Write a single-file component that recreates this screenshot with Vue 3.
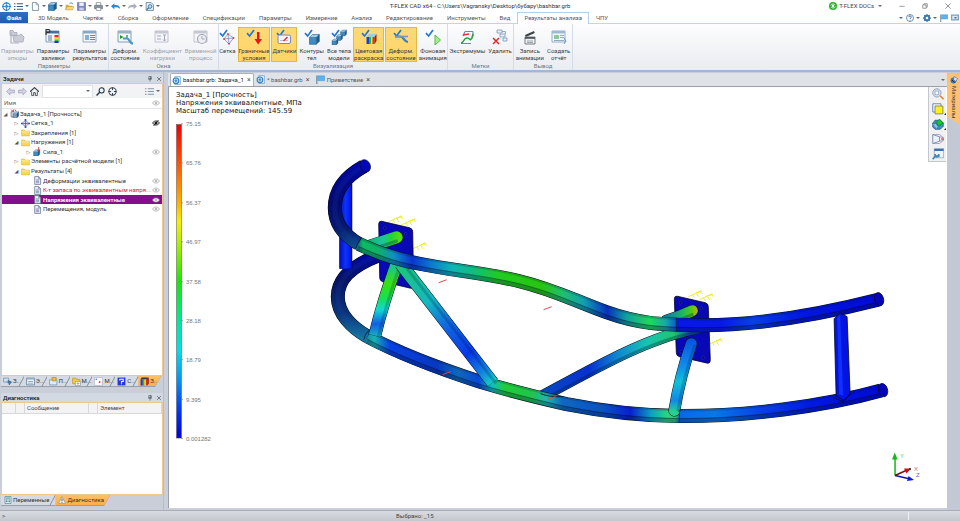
<script setup>
import { ref } from 'vue'

const tick = '<path d="M1 4.2l2.6 2.8L8 1" fill="none" stroke="#1f78d8" stroke-width="1.7"/>'
const cube = (x, y, s, c = '#3e8cc4') =>
  `<g transform="translate(${x} ${y}) scale(${s})"><path d="M0 3h7v7H0z" fill="${c}"/><path d="M0 3l3-3h7L7 3z" fill="#9fd0ee"/><path d="M7 3l3-3v7l-3 3z" fill="#1d5c8c"/><path d="M0 3h7v7H0zM0 3l3-3h7L7 3M10 0v7l-3 3" fill="none" stroke="#1c5480" stroke-width=".6"/></g>`
const folder = '<path d="M1 3.500h5l1.500 2H15v8.500H1z" fill="#f7d75c" stroke="#d9b040" stroke-width="1"/><path d="M1.500 7h13" stroke="#fdeb9c" stroke-width="2"/>'
const page = '<path d="M3 1h7l3.500 3.500V15H3z" fill="#eef1f8" stroke="#66708c" stroke-width="1.300"/><path d="M10 1v4h3.500M5 7h6M5 9.500h6M5 12h6" fill="none" stroke="#5a6c9c" stroke-width="1.200"/>'
const windowShape = (c, t) =>
  `<path d="M1 2h13v11H1z" fill="#f4f6fa" stroke="${c}" stroke-width=".8"/><path d="M1 2h13v2.500H1z" fill="${t}"/>`

const icons = {
  logo: '<circle cx="8" cy="8" r="6.500" fill="#eef7fd" stroke="#2a86c8" stroke-width="2"/><circle cx="8" cy="8" r="2.500" fill="#2a86c8"/><path d="M8 0v5M8 11v5M0 8h5M11 8h5" stroke="#2a86c8" stroke-width="1.800"/>',
  file: '<path d="M5 1h10v14H5z" fill="#e8f2fb" stroke="#6c9cc8" stroke-width="1.200"/><circle cx="7" cy="8.500" r="5" fill="#d4eafa" stroke="#2a80c8" stroke-width="2"/><path d="M7 5.500v6M4.500 8.500h5" stroke="#2a6cb0" stroke-width="1.500"/>',
  list: '<path d="M5 3h11M5 8h11M5 13h11" stroke="#3a5878" stroke-width="1.800"/><path d="M0 3h2.500M0 8h2.500M0 13h2.500" stroke="#3a5878" stroke-width="2"/>',
  doc: '<path d="M2.500 1h7l4 4v10h-11z" fill="#fff" stroke="#7088a0" stroke-width="1.500"/><path d="M9.500 1v4h4" fill="none" stroke="#7088a0" stroke-width="1.200"/>',
  cube: cube(0.5, 1, 1.45),
  open: '<path d="M1 5h5l1 1.500h6V14H1z" fill="#d9b23e"/><path d="M1 14l3-6h12l-3 6z" fill="#f7d873" stroke="#b98d20" stroke-width=".8"/><path d="M8 3c2-2 5-2 6 1" fill="none" stroke="#3878b8" stroke-width="1.600"/>',
  save: '<path d="M1 1h14v14H1z" fill="#7d86c4" stroke="#525a98"/><path d="M4 1h8v6H4z" fill="#eef0fa"/><path d="M4 10h8v5H4z" fill="#c8cde8"/>',
  print: '<path d="M4 1h8v5H4z" fill="#fff" stroke="#606870"/><path d="M1 6h14v6H1z" fill="#8c949e" stroke="#5c646e"/><path d="M4 10h8v5H4z" fill="#fff" stroke="#606870"/>',
  undo: '<path d="M6 2L0 7.500 6 13V9.500c4-1 8 0 10 3 0-6-4-8-10-7z" fill="#2e86d0"/>',
  redo: '<path d="M10 2l6 5.500-6 5.500V9.500c-4-1-8 0-10 3 0-6 4-8 10-7z" fill="#a9aec0"/>',
  preview: '<path d="M2 1h9l4 4v10H2z" fill="#eaf2fa" stroke="#4a7090" stroke-width="1.300"/><circle cx="9" cy="8" r="3.300" fill="#bfe0f4" stroke="#2d648c" stroke-width="1.500"/><path d="M6.500 10.500L3 14" stroke="#2d648c" stroke-width="2"/>',
  docs: '<circle cx="8" cy="8" r="8" fill="#2bb32b"/><path d="M3.500 7a5 5 0 018-1.500M12.500 9a5 5 0 01-8 1.500" fill="none" stroke="#fff" stroke-width="1.800"/><path d="M6 6h4v4H6z" fill="#fff"/>',
  help: '<circle cx="8" cy="8" r="7" fill="#fff" stroke="#3a6f98" stroke-width="1.500"/><path d="M5.500 6.200c0-3.400 5-3.400 5 0 0 1.800-2.500 2-2.500 3.800M8 11.500v1.700" fill="none" stroke="#2d6088" stroke-width="1.700"/>',
  gear: '<circle cx="8" cy="8" r="4.500" fill="none" stroke="#3f7cac" stroke-width="4"/><path d="M8 0v16M0 8h16M2.400 2.400l11.200 11.200M13.600 2.400L2.400 13.600" stroke="#3f7cac" stroke-width="2.500"/><circle cx="8" cy="8" r="2.500" fill="#fff"/>',
  flag: '<path d="M1.500 1v15" stroke="#5c7890" stroke-width="1.800"/><path d="M3 1.500h12.500v8.500H3z" fill="#5cb3ee" stroke="#3a88c4" stroke-width=".8"/>',
  monitor: '<path d="M0 1h16v12H0z" fill="#7e9fc0"/><path d="M2.500 3.500h11v7h-11z" fill="#dbeaf6"/><path d="M7 6h4v3H7z" fill="#3a709c"/>',
  pEpure: '<path d="M1 1.500h3l1 2h3v3H1zM4 7c2-2 5 1 8-2l3 3-1 5H5z" fill="#c9ccd6" stroke="#a5a9b8" stroke-width=".8"/><path d="M2 3v11h8" fill="none" stroke="#b0b4c2" stroke-width="1.200"/>',
  pFill: windowShape('#6c88a8', '#48719c') + '<path d="M9.500 6h4v2.500h-4z" fill="#ee2a1c"/><path d="M9.500 8.500h4v2h-4z" fill="#f6dc1c"/><path d="M9.500 10.500h4V12h-4z" fill="#2cc43c"/><path d="M9.500 12h4v2h-4z" fill="#1838d8"/><path d="M3 7h4M3 9h4M3 11h4" stroke="#5a7898"/><path d="M1 6V.5h2.500c2 0 2 3 0 3H1" fill="none" stroke="#333" stroke-width="1.100"/>',
  pResult: windowShape('#7f98b4', '#88a8c8') + '<path d="M3 6h4v5H3z" fill="#78b4dc"/><path d="M8 6.500h5M8 8.500h5M8 10.500h5" stroke="#5a7898" stroke-width=".9"/>',
  wDeform: windowShape('#6c88a8', '#9cb2c8') + '<path d="M3 6l3.500 2L3 10z" fill="#18a028"/><path d="M10 6v4" stroke="#18a028" stroke-width="1.300"/><path d="M6 9.500h4c3 0 2 5 6 5" fill="none" stroke="#4a98c8" stroke-width="2.200"/>',
  wLoad: windowShape('#b4b8c4', '#c6c9d2') + '<path d="M3 7h4M3 10h4M10.500 6v6M9 10.500l1.500 1.500 1.500-1.500M9 6h3" fill="none" stroke="#a4a8b6"/>',
  wTime: windowShape('#b4b8c4', '#c6c9d2') + '<circle cx="9" cy="10" r="4.500" fill="#eceef2" stroke="#a4a8b6" stroke-width="1.200"/><path d="M9 7v3h2.500" fill="none" stroke="#a4a8b6"/>',
  mesh: tick + '<path d="M5 10l4-5 5.500 4-4.500 6zM9 5l1 10M5 10l9.500-1" fill="none" stroke="#8c98cc" stroke-width=".9"/><path d="M8.200 4.200h1.600v1.600H8.200zM4.200 9.200h1.600v1.600H4.200zM13.700 8.200h1.600v1.600h-1.600zM9.200 14h1.600v1.600H9.200z" fill="#e02828"/>',
  bounds: tick + '<path d="M11 3h2.500v7H16l-3.800 5.500L8.500 10H11z" fill="#ec1616"/>',
  sensors: tick + '<rect x="2" y="6" width="12.500" height="8.500" rx="1.500" fill="#f3f4fb" stroke="#7c88b8"/><path d="M4 11.500h8" stroke="#9ca4c4" stroke-width=".7"/><path d="M7.500 12l4-4" stroke="#e02828" stroke-width="1.300"/>',
  contours: tick + cube(5.5, 5.5, 0.98),
  bodies: tick + cube(9.5, 1, 0.6) + cube(5.5, 5.5, 0.6) + cube(1, 10, 0.6),
  paint: tick + '<path d="M5.500 8l2.500-3h7.500l-2 3z" fill="#9ad0dc"/><path d="M5.500 8h2.500v7H5.500z" fill="#1d3cd8"/><path d="M8 8h2v7H8z" fill="#18c43c"/><path d="M10 8h1.500v7H10z" fill="#f2e01c"/><path d="M11.500 8h2v7h-2z" fill="#ee2818"/><path d="M13.500 8l2-3v7l-2 3z" fill="#a81408"/>',
  deform: tick + '<path d="M2 7.500h5c4 0 4 5.500 8 5.500" fill="none" stroke="#3c80b8" stroke-width="2.200"/><path d="M2 7.500h13" stroke="#7898ac" stroke-width="1.600"/><path d="M2 10h5" stroke="#b8d0e0"/>',
  anim: tick + '<path d="M10 6l5.500 5-5.500 5z" fill="#a6f08c" stroke="#56b84c"/>',
  extrema: '<path d="M6 2.500h8M6 2.500L4 7M14 2.500v5M2 14.500h10" stroke="#6f8ca4" stroke-width="1.200"/><path d="M2 14c4-1 2-5 6-5s2 4 5 0l1-4" fill="none" stroke="#2c9c40" stroke-width="1.500"/><path d="M4 6l6-1" stroke="#e83030" stroke-width="1.500"/>',
  remove: '<path d="M5 1h5v3H5zM8 5h5v3H8zM11 9h4v3h-4zM10 2.500h3.500V5" fill="#e8f0f8" stroke="#7c98b8" stroke-width=".8"/><path d="M1 9l6 6M7 9l-6 6" stroke="#e42828" stroke-width="1.500"/>',
  record: '<path d="M3 6l9-4 .8 2-9 4z" fill="#3c4448"/><path d="M3 8h10v7H3z" fill="#eef0f2" stroke="#59636a" stroke-width=".8"/><path d="M3 8h10v1.800H3z" fill="#4c565c"/><path d="M5 12h6M5 13.500h6" stroke="#808c94" stroke-width=".7"/>',
  report: windowShape('#7fa0bc', '#9cbcd4') + '<path d="M3 6h5v4H3z" fill="#8cc89c"/><path d="M9 6.500h4M9 8.500h4M3 11.500h10" stroke="#7c94ac" stroke-width=".8"/><path d="M13 9l2 3-2 3" fill="none" stroke="#5a9cc8"/>',
  back: '<path d="M7 2L1 8l6 6v-3.500h8v-5H7z" fill="#d3d6e4" stroke="#8c90ac"/>',
  fwd: '<path d="M9 2l6 6-6 6v-3.500H1v-5h8z" fill="#d3d6e4" stroke="#8c90ac"/>',
  home: '<path d="M0 8.500L8 1l8 7.500" fill="none" stroke="#333c48" stroke-width="1.800"/><path d="M3 8v7h3.500v-5h3v5H13V8" fill="#fff" stroke="#333c48" stroke-width="1.500"/>',
  find: '<circle cx="10" cy="6" r="4.500" fill="#e8f4fb" stroke="#22303c" stroke-width="1.800"/><path d="M6.500 9.500L1 15" stroke="#22303c" stroke-width="2.500"/>',
  target: '<circle cx="8" cy="8" r="6.500" fill="none" stroke="#2c3844" stroke-width="1.800"/><path d="M8 1v4.500M8 10.500V15M1 8h4.500M10.500 8H15" stroke="#2c3844" stroke-width="1.600"/>',
  eye: '<path d="M1 8c3.500-5.500 10.500-5.500 14 0-3.500 5.500-10.500 5.500-14 0z" fill="#fafafa" stroke="#9a9a9a" stroke-width="1.300"/><circle cx="8" cy="8" r="2.500" fill="#bcbcbc"/>',
  eyeOff: '<path d="M1 8c3.500-5.500 10.500-5.500 14 0-3.500 5.500-10.500 5.500-14 0z" fill="#ddd" stroke="#222" stroke-width="1.600"/><circle cx="8" cy="8" r="3" fill="#222"/><path d="M3 14L13 2" stroke="#111" stroke-width="1.600"/>',
  task: cube(5, 5, 1.05, '#8a98b4') + '<path d="M2 5v9h4" fill="none" stroke="#60708c" stroke-width="1.500"/><path d="M2 1l4 4M6 1v4H2" stroke="#e02020" stroke-width="1.600" fill="none"/><path d="M9 1l2 3" stroke="#e02020" stroke-width="1.600"/>',
  net: '<path d="M8 2l6 6-6 6-6-6zM8 2v12M2 8h12" fill="#e4ecfa" stroke="#5470b8" stroke-width="1.400"/><path d="M6.500 0h3v3h-3zM0 6.500h3v3H0zM6.500 13h3v3h-3zM13 6.500h3v3h-3z" fill="#3850a8"/><circle cx="8" cy="8" r="1.800" fill="#e03030"/>',
  folder,
  force: cube(1, 5, 1.1) + '<path d="M10 0v7M8 5l2 3 2-3" fill="none" stroke="#e02020" stroke-width="1.400"/>',
  page,
  tabA: '<path d="M1 2h9v7H1z" fill="#cfe0f0" stroke="#5a7898"/><path d="M6 9h9M9 6l6 3-4 5z" fill="#3e88c0" stroke="#2a5c88"/>',
  tabB: '<path d="M1 2h14v12H1z" fill="#f0f5fb" stroke="#5a7898" stroke-width="1.400"/><path d="M1 3.500h14" stroke="#8aaaca" stroke-width="2"/><path d="M3.500 8h9M3.500 11h9" stroke="#5a7898"/>',
  tabC: '<path d="M1 5h13v9H1z" fill="#dcecf8" stroke="#5a7898"/><path d="M5 1h8l-1 6H6z" fill="#efc040" stroke="#a87818"/>',
  tabD: '<path d="M1 2h6l1 2h6v8H1z" fill="#f3cb3c" stroke="#b08818"/><path d="M6 8h9v7H6z" fill="#fff" stroke="#7888a0"/><path d="M8 11.500h5M10.500 9v5" stroke="#d8a010" stroke-width="1.500"/>',
  tabE: '<path d="M1 1h14v14H1z" fill="#fff" stroke="#a4a8c8"/><circle cx="10" cy="9" r="1.600" fill="#e02020"/><circle cx="4" cy="4" r="1.300" fill="#3858c8"/>',
  tabF: '<path d="M1 1h14v14H1z" fill="#2238d8"/><path d="M5 6V4h6v4H8v2M8 11v2" fill="none" stroke="#fff" stroke-width="2"/>',
  tabG: '<path d="M1 4h4v11H1z" fill="#1d3cd8"/><path d="M5 4h3v11H5z" fill="#18c43c"/><path d="M8 4h2.500v11H8z" fill="#f2e01c"/><path d="M10.500 4H13v11h-2.500z" fill="#ee2818"/><path d="M1 4l2-3h12.500L13 4z" fill="#38383c"/><path d="M13 4l2.500-3v11L13 15z" fill="#901408"/>',
  vars: '<path d="M2 1h12v14H2z" fill="#d8ecec" stroke="#588898" stroke-width="1.400"/><path d="M4 3h8v2.500H4z" fill="#68a8a8"/><path d="M4 8h2M7 8h2M10 8h2M4 11h2M7 11h2M10 11h2" stroke="#48788c" stroke-width="1.800"/>',
  warn: '<path d="M8 1l7 14H1z" fill="#eef0f2" stroke="#9098a0" stroke-width="1.400"/><path d="M8 5.500v5M8 12v1.700" stroke="#404850" stroke-width="1.700"/>',
  zoom: '<circle cx="6.500" cy="6.500" r="5.500" fill="#e4ecf6" stroke="#8c9cb8" stroke-width="1.300"/><path d="M4 4h5v5H4z" fill="#fff" stroke="#7c90b4"/><path d="M11 10.500l4.500 4.500" stroke="#e48a2c" stroke-width="2.200"/>',
  yellow: '<path d="M1 1h11v11H1z" fill="#f4f6fb" stroke="#5468a0"/><path d="M4 4h10.500v10.500H4z" fill="#ffee22" stroke="#6c7450"/>',
  green: '<path d="M1 7l3-4h7l4 4v4l-4 4H4l-3-3z" fill="#3f93cc" stroke="#1c5078"/><path d="M10 1.500l5 5-5 4-5-4z" fill="#14c828" stroke="#107828"/><path d="M1 8l4-1 3 4-1 4" fill="#8cc4e8" stroke="#1c5078" stroke-width=".7"/>',
  camera: '<path d="M1 2l9 3v6l-9 3z" fill="#eef0fa" stroke="#6870a0"/><path d="M1 2h9l5 4v4l-5 4H1M10 5l5 1M10 11l5-1" fill="none" stroke="#8088b0" stroke-width=".9"/><path d="M12 8h4" stroke="#e02838" stroke-width="1.400"/>',
  wrench: '<path d="M3 1h12.500v12H3z" fill="#eef4fa" stroke="#8ca4c0"/><path d="M3 1h12.500v3H3z" fill="#3c70b8"/><path d="M1 15l4-5M4 8c0 2 1 3.500 4 2.500M9 8v3l-4 1" fill="none" stroke="#3c84bc" stroke-width="2.200"/>',
  material: '<circle cx="7" cy="9" r="6" fill="#2f78c4"/><path d="M8 1l7 4-3 6-5-3z" fill="#d4e4f4" stroke="#34588c"/><path d="M4 8l5 5" stroke="#14365c" stroke-width="2"/>',
  pin: '<path d="M5 1h6v7H5zM3 8h10M8 8v7M10 1v7" fill="none" stroke="#444c58" stroke-width="1.600"/>',
  close: '<path d="M3 3l10 10M13 3L3 13" stroke="#444c58" stroke-width="1.800"/>',
  min: '<path d="M1 9h14" stroke="#666" stroke-width="1.600"/>',
  restore: '<path d="M2 5h9v9H2zM5 5V2h9v9h-3" fill="none" stroke="#666" stroke-width="1.700"/>',
  quit: '<path d="M1 1l14 14M15 1L1 15" stroke="#666" stroke-width="1.800"/>',
}

const quick = [
  { icon: 'logo', label: 'T-FLEX', gap: true },
  { icon: 'list', label: 'Меню', caret: true },
  { icon: 'doc', label: 'Новый', caret: true },
  { icon: 'cube', label: 'Новая 3D модель', caret: true },
  { icon: 'open', label: 'Открыть', gap: true },
  { icon: 'save', label: 'Сохранить', caret: true },
  { icon: 'print', label: 'Печать', caret: true },
  { icon: 'undo', label: 'Отменить', caret: true },
  { icon: 'redo', label: 'Вернуть', caret: true },
  { icon: 'preview', label: 'Просмотр', caret: true },
]

const ribbonTabs = ['3D Модель', 'Чертёж', 'Сборка', 'Оформление', 'Спецификации', 'Параметры', 'Измерение', 'Анализ', 'Редактирование', 'Инструменты', 'Вид', 'Результаты анализа', 'ЧПУ']
const activeTab = ref('Результаты анализа')

const groups = [
  { name: 'Параметры', items: [
    { icon: 'pEpure', text: ['Параметры', 'эпюры'], off: true },
    { icon: 'pFill', text: ['Параметры', 'заливки'] },
    { icon: 'pResult', text: ['Параметры', 'результатов'] },
  ] },
  { name: 'Окна', items: [
    { icon: 'wDeform', text: ['Деформ.', 'состояние'] },
    { icon: 'wLoad', text: ['Коэффициент', 'нагрузки'], off: true },
    { icon: 'wTime', text: ['Временной', 'процесс'], off: true },
  ] },
  { name: 'Визуализация', items: [
    { icon: 'mesh', text: ['Сетка'] },
    { icon: 'bounds', text: ['Граничные', 'условия'], on: true },
    { icon: 'sensors', text: ['Датчики'], on: true },
    { icon: 'contours', text: ['Контуры', 'тел'] },
    { icon: 'bodies', text: ['Все тела', 'модели'] },
    { icon: 'paint', text: ['Цветовая', 'раскраска'], on: true },
    { icon: 'deform', text: ['Деформ.', 'состояние'], on: true },
    { icon: 'anim', text: ['Фоновая', 'анимация'] },
  ] },
  { name: 'Метки', items: [
    { icon: 'extrema', text: ['Экстремумы'] },
    { icon: 'remove', text: ['Удалить'] },
  ] },
  { name: 'Вывод', items: [
    { icon: 'record', text: ['Запись', 'анимации'] },
    { icon: 'report', text: ['Создать', 'отчёт'] },
  ] },
]

const tree = [
  { level: 0, arrow: '◢', icon: 'task', text: 'Задача_1 [Прочность]' },
  { level: 1, arrow: '▷', icon: 'net', text: 'Сетка_1', eye: 'eyeOff' },
  { level: 1, arrow: '▷', icon: 'folder', text: 'Закрепления [1]' },
  { level: 1, arrow: '◢', icon: 'folder', text: 'Нагружения [1]' },
  { level: 2, arrow: '▷', icon: 'force', text: 'Сила_1', eye: 'eye' },
  { level: 1, arrow: '▷', icon: 'folder', text: 'Элементы расчётной модели [1]' },
  { level: 1, arrow: '◢', icon: 'folder', text: 'Результаты [4]' },
  { level: 2, icon: 'page', text: 'Деформации эквивалентные', eye: 'eye' },
  { level: 2, icon: 'page', text: 'К-т запаса по эквивалентным напря...', eye: 'eye', red: true },
  { level: 2, icon: 'page', text: 'Напряжения эквивалентные', eye: 'eye', selected: true },
  { level: 2, icon: 'page', text: 'Перемещения, модуль', eye: 'eye' },
]

const paneTabs = [
  { icon: 'tabA', text: 'З...' }, { icon: 'tabB', text: 'Э...' }, { icon: 'tabC', text: 'П...' },
  { icon: 'tabD', text: 'М...' }, { icon: 'tabE', text: 'М...' }, { icon: 'tabF', text: 'С...' },
  { icon: 'tabG', text: 'З...', on: true },
]

const docTabs = [
  { icon: 'file', text: 'bashbar.grb: Задача_1', on: true },
  { icon: 'file', text: '* bashbar.grb' },
  { icon: 'flag', text: 'Приветствие' },
]

const viewTools = [
  { icon: 'zoom', label: 'Масштаб' },
  { icon: 'yellow', label: 'Вид', more: true },
  { icon: 'green', label: 'Закраска', more: true },
  { icon: 'camera', label: 'Камера' },
  { icon: 'wrench', label: 'Настройка' },
]

const scale = ['75.15', '65.76', '56.37', '46.97', '37.58', '28.18', '18.79', '9.395', '0.001282']
  .map((value, i) => ({ value, y: 124 + Math.round(i * 39.4) }))

const stops = {
  legend: [[0, '#f00000'], [12, '#ff5000'], [25, '#ffb000'], [31, '#f8f000'], [37, '#b8f000'], [50, '#18e800'], [62, '#00e890'], [72, '#00e0e8'], [82, '#0090f8'], [92, '#0030f8'], [100, '#0000d8']],
  top: [[0, '#0a6878'], [1.2, '#0cbc60'], [4, '#10b068'], [7, '#1090c0'], [10.5, '#0a34d4'], [14, '#0a78d0'], [18, '#10b4b4'], [22, '#12bc80'], [27, '#20cc20'], [35, '#28c410'], [39, '#20c070'], [43, '#10a0b0'], [47.5, '#0830c0'], [51, '#10a0a0'], [55.5, '#20d858'], [58.5, '#18a8a8'], [60.5, '#0a58d0'], [60.7, '#0818e8'], [69, '#0818e8'], [75, '#0840e4'], [84, '#0018e0'], [100, '#0008d4']],
  low: [[0, '#1878a0'], [2, '#18b4b0'], [5, '#0840e4'], [14, '#0838c0'], [18, '#1068b8'], [22, '#0848d8'], [24.5, '#10c0c0'], [27, '#20cc38'], [32, '#20c44c'], [35, '#20b4b0'], [38, '#1068c0'], [46, '#0850c4'], [51, '#0820d0'], [55, '#10a0c0'], [58, '#24d880'], [59.5, '#30c870'], [60.5, '#0868e8'], [67, '#0878e8'], [76, '#0840e4'], [86, '#0018e0'], [100, '#0008d4']],
}

const topRail = 'M359 244C385 256 400 260 420 264C455 271 485 273 520 281.500S575 301 607 312.500S660 325 700 325.500C760 326 820 315 879 300'
const lowRail = 'M368 337C400 354 440 369 480 382C500 388 530 396 567 404.500C605 412 640 416 680 416.500C745 417 825 407 882 391'
const backTop = 'M364 166.500C345 177 335 190 335 208C335 224 345 236 359 244'
const backLow = 'M378 256C350 267 338 280 338 297C338 314 352 328 368 337'

const tubes = {
  back: [
    { d: backLow, w: 13, fill: 'url(#gBackLow)' },
    { d: 'M346 184V269', w: 12, fill: 'url(#gPost)', flat: true },
    { d: backTop, w: 13, fill: 'url(#gBackTop)' },
  ],
  mid: [
    { d: 'M368 247Q380 243 397 237.500', w: 12, fill: 'url(#gConnL)', round: true },
    { d: 'M667 321Q680 317 693 311', w: 11, fill: 'url(#gConnR)', round: true },
    { d: 'M542 397C590 371 625 352 655 341C670 335 680 332 700 328', w: 11, fill: 'url(#gStrutC)' },
  ],
  struts: [
    { d: 'M397 264Q383 303 375 336', w: 12, fill: 'url(#gStrutA)' },
    { d: 'M401 264L493 383', w: 12, fill: 'url(#gStrutB)' },
    { d: 'M692 344Q681 375 675 411', w: 11, fill: 'url(#gStrutD)', round: true },
  ],
}

const anchors = [[398, 217], [411, 220], [422, 244], [698, 292], [709, 295], [718, 340]]
const pulls = [[439, 283], [544, 310], [443, 375], [548, 400]]
</script>

<template>
  <div class="app">
    <header class="titlebar">
      <nav class="quick" aria-label="Быстрый доступ">
        <template v-for="q in quick" :key="q.icon">
          <button class="mini" :class="{ spaced: q.gap }" :aria-label="q.label">
            <svg class="ic9" viewBox="0 0 16 16" v-html="icons[q.icon]" />
          </button>
          <i v-if="q.caret" class="caret" />
        </template>
      </nav>
      <h1>T-FLEX CAD x64 - C:\Users\Vagransky\Desktop\бубару\bashbar.grb</h1>
      <div class="account">
        <button class="docs"><svg class="ic8" viewBox="0 0 16 16" v-html="icons.docs" />T-FLEX DOCs<i class="caret" /></button>
        <button class="win" aria-label="Свернуть"><svg class="ic6" viewBox="0 0 16 16" v-html="icons.min" /></button>
        <button class="win" aria-label="Восстановить"><svg class="ic6" viewBox="0 0 16 16" v-html="icons.restore" /></button>
        <button class="win" aria-label="Закрыть"><svg class="ic6" viewBox="0 0 16 16" v-html="icons.quit" /></button>
      </div>
    </header>

    <nav class="ribbon-tabs">
      <button class="file">Файл</button>
      <button
        v-for="t in ribbonTabs" :key="t" class="rtab" :class="{ on: t === activeTab }"
        @click="activeTab = t"
      >{{ t }}</button>
      <div class="tab-tools">
        <i class="caret" />
        <button class="mini" aria-label="Справка"><svg class="ic8" viewBox="0 0 16 16" v-html="icons.help" /></button>
        <i class="caret" />
        <button class="mini" aria-label="Настройки"><svg class="ic8" viewBox="0 0 16 16" v-html="icons.gear" /></button>
        <i class="caret" />
        <button class="mini" aria-label="Приветствие"><svg class="ic8" viewBox="0 0 16 16" v-html="icons.flag" /></button>
        <button class="mini" aria-label="Экран"><svg class="ic8" viewBox="0 0 16 16" v-html="icons.monitor" /></button>
      </div>
    </nav>

    <section class="ribbon">
      <div v-for="g in groups" :key="g.name" class="group">
        <div class="group-items">
          <button v-for="b in g.items" :key="b.icon" class="big" :class="{ on: b.on }" :disabled="b.off">
            <svg class="ic16" viewBox="0 0 16 16" v-html="icons[b.icon]" />
            <span v-for="line in b.text" :key="line">{{ line }}</span>
          </button>
        </div>
        <div class="group-name">{{ g.name }}</div>
      </div>
    </section>

    <main class="work">
      <aside class="side">
        <section class="pane tasks">
          <h2 class="pane-head">Задачи
            <button aria-label="Закрепить"><svg class="ic6" viewBox="0 0 16 16" v-html="icons.pin" /></button>
            <button aria-label="Закрыть"><svg class="ic6" viewBox="0 0 16 16" v-html="icons.close" /></button>
          </h2>
          <div class="pane-body">
            <div class="toolbar">
              <button class="tool" aria-label="Назад"><svg class="ic9" viewBox="0 0 16 16" v-html="icons.back" /></button>
              <button class="tool" aria-label="Вперёд"><svg class="ic9" viewBox="0 0 16 16" v-html="icons.fwd" /></button>
              <button class="tool" aria-label="Домой"><svg class="ic9" viewBox="0 0 16 16" v-html="icons.home" /></button>
              <div class="search"><input type="text" aria-label="Поиск"><i class="caret" /></div>
              <button class="tool" aria-label="Найти"><svg class="ic9" viewBox="0 0 16 16" v-html="icons.find" /></button>
              <button class="tool" aria-label="Показать"><svg class="ic9" viewBox="0 0 16 16" v-html="icons.target" /></button>
              <button class="tool last" aria-label="Вид списка"><svg class="ic9 pale" viewBox="0 0 16 16" v-html="icons.list" /></button>
              <i class="caret" />
            </div>
            <div class="col-head"><span>Имя</span><svg class="ic8" viewBox="0 0 16 16" v-html="icons.eye" /></div>
            <ul class="tree">
              <li v-for="n in tree" :key="n.text" :class="['lv' + n.level, { red: n.red, selected: n.selected }]">
                <span class="arrow">{{ n.arrow }}</span>
                <svg class="ic9" viewBox="0 0 16 16" v-html="icons[n.icon]" />
                <span class="label">{{ n.text }}</span>
                <svg v-if="n.eye" class="ic8" viewBox="0 0 16 16" v-html="icons[n.eye]" />
              </li>
            </ul>
          </div>
          <div class="pane-tabs">
            <button v-for="t in paneTabs" :key="t.icon" :class="{ on: t.on }">
              <svg class="ic9" viewBox="0 0 16 16" v-html="icons[t.icon]" />{{ t.text }}
            </button>
          </div>
        </section>

        <section class="pane diag">
          <h2 class="pane-head">Диагностика
            <button aria-label="Закрепить"><svg class="ic6" viewBox="0 0 16 16" v-html="icons.pin" /></button>
            <button aria-label="Закрыть"><svg class="ic6" viewBox="0 0 16 16" v-html="icons.close" /></button>
          </h2>
          <div class="pane-body">
            <table>
              <thead><tr><th class="c1" /><th class="c2" /><th>Сообщение</th><th class="c2" /><th>Элемент</th></tr></thead>
            </table>
          </div>
          <div class="pane-tabs wide">
            <button><svg class="ic8" viewBox="0 0 16 16" v-html="icons.vars" />Переменные</button>
            <button class="on"><svg class="ic8" viewBox="0 0 16 16" v-html="icons.warn" />Диагностика</button>
          </div>
        </section>
      </aside>

      <section class="documents">
        <div class="doc-tabs">
          <div v-for="d in docTabs" :key="d.text" class="dtab" :class="{ on: d.on }">
            <svg class="ic9" viewBox="0 0 16 16" v-html="icons[d.icon]" />
            <span>{{ d.text }}</span>
            <button :aria-label="'Закрыть ' + d.text">×</button>
          </div>
          <i class="caret end" />
        </div>
        <div class="view">
          <svg class="scene" viewBox="169 87 760 421" preserveAspectRatio="xMinYMin meet">
            <defs>
              <linearGradient id="gLegend" x1="0" y1="0" x2="0" y2="1">
                <stop v-for="s in stops.legend" :key="s[0]" :offset="s[0] + '%'" :stop-color="s[1]" />
              </linearGradient>
              <linearGradient id="gTop" gradientUnits="userSpaceOnUse" x1="357" y1="0" x2="886" y2="0">
                <stop v-for="s in stops.top" :key="s[0]" :offset="s[0] + '%'" :stop-color="s[1]" />
              </linearGradient>
              <linearGradient id="gLow" gradientUnits="userSpaceOnUse" x1="364" y1="0" x2="888" y2="0">
                <stop v-for="s in stops.low" :key="s[0]" :offset="s[0] + '%'" :stop-color="s[1]" />
              </linearGradient>
              <linearGradient id="gPost" gradientUnits="userSpaceOnUse" x1="340" y1="0" x2="353" y2="0">
                <stop offset="0" stop-color="#0010c0" /><stop offset=".45" stop-color="#0c34fa" /><stop offset=".8" stop-color="#0418f0" /><stop offset="1" stop-color="#0008a0" />
              </linearGradient>
              <linearGradient id="gBackTop" gradientUnits="userSpaceOnUse" x1="0" y1="160" x2="0" y2="246">
                <stop offset="0" stop-color="#0008a8" /><stop offset=".5" stop-color="#040a6c" /><stop offset=".8" stop-color="#061a6c" /><stop offset="1" stop-color="#0c4c88" />
              </linearGradient>
              <linearGradient id="gBackLow" gradientUnits="userSpaceOnUse" x1="0" y1="256" x2="0" y2="338">
                <stop offset="0" stop-color="#0008a0" /><stop offset=".3" stop-color="#061460" /><stop offset=".7" stop-color="#0a3478" /><stop offset="1" stop-color="#1478a0" />
              </linearGradient>
              <linearGradient id="gConnL" gradientUnits="userSpaceOnUse" x1="366" y1="0" x2="400" y2="0">
                <stop offset="0" stop-color="#10b468" /><stop offset=".5" stop-color="#1cc49c" /><stop offset=".75" stop-color="#20d438" /><stop offset="1" stop-color="#58dc10" />
              </linearGradient>
              <linearGradient id="gConnR" gradientUnits="userSpaceOnUse" x1="667" y1="0" x2="697" y2="0">
                <stop offset="0" stop-color="#0c80a0" /><stop offset=".5" stop-color="#18b468" /><stop offset=".85" stop-color="#50cc18" /><stop offset="1" stop-color="#b0b410" />
              </linearGradient>
              <linearGradient id="gStrutA" gradientUnits="userSpaceOnUse" x1="0" y1="266" x2="0" y2="337">
                <stop offset="0" stop-color="#18c490" /><stop offset=".25" stop-color="#38e010" /><stop offset=".45" stop-color="#18e050" /><stop offset=".62" stop-color="#10d8d0" /><stop offset=".82" stop-color="#1060e8" /><stop offset="1" stop-color="#18b4c0" />
              </linearGradient>
              <linearGradient id="gStrutB" gradientUnits="userSpaceOnUse" x1="402" y1="267" x2="493" y2="382">
                <stop offset="0" stop-color="#1cc47c" /><stop offset=".3" stop-color="#14b8c0" /><stop offset=".5" stop-color="#1068e0" /><stop offset=".75" stop-color="#0838e8" /><stop offset=".9" stop-color="#1080e0" /><stop offset="1" stop-color="#14c8c8" />
              </linearGradient>
              <linearGradient id="gStrutC" gradientUnits="userSpaceOnUse" x1="545" y1="0" x2="692" y2="0">
                <stop offset="0" stop-color="#0848c0" /><stop offset=".3" stop-color="#0830d0" /><stop offset=".5" stop-color="#1088d0" /><stop offset=".7" stop-color="#18c4b0" /><stop offset=".88" stop-color="#20c470" /><stop offset="1" stop-color="#0c40b8" />
              </linearGradient>
              <linearGradient id="gStrutD" gradientUnits="userSpaceOnUse" x1="0" y1="338" x2="0" y2="412">
                <stop offset="0" stop-color="#0850e0" /><stop offset=".4" stop-color="#1090e8" /><stop offset=".6" stop-color="#10c0d8" /><stop offset=".85" stop-color="#1088e8" /><stop offset="1" stop-color="#28d090" />
              </linearGradient>
            </defs>

            <g class="caption">
              <text x="176" y="97">Задача_1 [Прочность]</text>
              <text x="176" y="105">Напряжения эквивалентные, МПа</text>
              <text x="176" y="113">Масштаб перемещений: 145.59</text>
            </g>
            <rect x="176.500" y="124.500" width="5" height="314" fill="url(#gLegend)" stroke="#555" stroke-width=".5" />
            <g v-for="s in scale" :key="s.value" class="mark">
              <path :d="`M181 ${s.y}h2`" stroke="#777" stroke-width=".7" />
              <text x="186" :y="s.y + 2">{{ s.value }}</text>
            </g>

            <g fill="none" stroke="#f0ec28" stroke-width="1">
              <path v-for="a in anchors" :key="a[0]" :transform="`translate(${a[0]} ${a[1]})`" d="M-9 5L4-1M-5 3l2 3M-1 1l2 4M3-1l2 3M-1 1l5-1" />
            </g>

            <template v-for="t in tubes.back" :key="t.d">
              <path class="tube" :d="t.d" stroke="#02041c" :stroke-width="t.w + 1" />
              <path class="tube" :d="t.d" :stroke="t.fill" :stroke-width="t.w" />
              <path v-if="!t.flat" class="tube" :d="t.d" stroke="#2848d0" stroke-opacity=".14" stroke-width="5" />
            </template>
            <ellipse cx="365.500" cy="166" rx="5" ry="6.500" transform="rotate(-25 365.500 166)" fill="#0008b8" stroke="#02041c" stroke-width=".6" />

            <g fill="#0808b4" stroke="#04042c" stroke-width=".8">
              <path d="M382 221.500L410 228Q413 229 413 232L414 285Q414 289 411 288.500L383 282Q380 281 380 278L379 224Q379 221 382 221.500Z" />
              <path d="M678 296.500L706 303Q709 304 709 307L711 360Q711 364 708 363.500L680 357Q677 356 677 353L675 299Q675 296 678 296.500Z" />
            </g>
            <g fill="#04043c" stroke="#4048e0" stroke-width=".4">
              <circle cx="385" cy="228" r="1.300" /><circle cx="406" cy="234" r="1.300" /><circle cx="387" cy="277" r="1.300" />
              <circle cx="681" cy="303" r="1.300" /><circle cx="702" cy="308.500" r="1.300" /><circle cx="682" cy="352" r="1.300" /><circle cx="704" cy="358" r="1.300" />
            </g>

            <template v-for="t in tubes.mid" :key="t.d">
              <path class="tube" :class="{ rounded: t.round }" :d="t.d" stroke="#031820" :stroke-width="t.w + 1" />
              <path class="tube" :class="{ rounded: t.round }" :d="t.d" :stroke="t.fill" :stroke-width="t.w" />
              <path class="tube" :d="t.d" stroke="#001830" stroke-opacity=".3" stroke-width="3" transform="translate(1 3.500)" />
            </template>

            <path class="tube" :d="lowRail" stroke="#02101c" stroke-width="14" />
            <path class="tube" :d="lowRail" stroke="url(#gLow)" stroke-width="13" />
            <path class="tube" :d="lowRail" stroke="#000c28" stroke-opacity=".28" stroke-width="4" transform="translate(-1 4.500)" />
            <path class="tube" :d="lowRail" stroke="#001020" stroke-opacity=".18" stroke-width="2" transform="translate(1 -5.500)" />
            <path class="tube" :d="lowRail" stroke="#000818" stroke-opacity=".65" stroke-width=".6" transform="translate(-.5 2.500)" />

            <template v-for="t in tubes.struts" :key="t.d">
              <path class="tube" :class="{ rounded: t.round }" :d="t.d" stroke="#02101c" :stroke-width="t.w + 1" />
              <path class="tube" :class="{ rounded: t.round }" :d="t.d" :stroke="t.fill" :stroke-width="t.w" />
              <path class="tube" :d="t.d" stroke="#000c38" stroke-opacity=".2" stroke-width="3" transform="translate(3.500 1)" />
            </template>
            <path d="M541 394Q550 398 564 397" fill="none" stroke="#021020" stroke-width=".8" />

            <path class="tube" :d="topRail" stroke="#02101c" stroke-width="14" />
            <path class="tube" :d="topRail" stroke="url(#gTop)" stroke-width="13" />
            <path class="tube" :d="topRail" stroke="#000c28" stroke-opacity=".28" stroke-width="4" transform="translate(-1 4.500)" />
            <path class="tube" :d="topRail" stroke="#001020" stroke-opacity=".18" stroke-width="2" transform="translate(1 -5.500)" />
            <path class="tube" :d="topRail" stroke="#000818" stroke-opacity=".65" stroke-width=".6" transform="translate(-.5 2.500)" />

            <g fill="#0404b8" stroke="#02041c" stroke-width=".7">
              <ellipse cx="880" cy="299.500" rx="4.500" ry="6.800" transform="rotate(-16 880 299.500)" />
              <ellipse cx="884" cy="390.500" rx="4.500" ry="6.800" transform="rotate(-16 884 390.500)" />
            </g>
            <path d="M362 238Q357 243 356 249M677 318v14M680 410v13M370 330Q365 334 364 340" fill="none" stroke="#021020" stroke-width=".7" />

            <path d="M835 319L841 313L848 317L851 394L845 401L837 396Z" fill="#0414e0" stroke="#02041c" stroke-width=".8" />
            <path d="M838 318L841 315L844 396L840 395Z" fill="#1030fc" />
            <path d="M834 398L844 402L852 394" fill="none" stroke="#02041c" stroke-width=".7" />

            <path v-for="p in pulls" :key="p[1]" :d="`M${p[0]} ${p[1]}l8-3`" stroke="#e84848" stroke-width="1" />

            <g class="axes">
              <path d="M896 476V459" stroke="#10b818" stroke-width="1.500" /><path d="M893 460L895.700 453L898.500 460Z" fill="#10b818" />
              <path d="M896 476L907 471" stroke="#801010" stroke-width="1.500" /><path d="M905 469L912 469L907.500 474Z" fill="#c81010" /><circle cx="911" cy="469.500" r="1" fill="#222" />
              <path d="M896 476L909 479" stroke="#1018b0" stroke-width="1.500" /><path d="M909.500 476.500L915 480.500L908 481.500Z" fill="#1018d0" />
              <text x="901" y="458" fill="#50d850">Y</text>
              <text x="915" y="472" fill="#e86060">X</text>
              <text x="917" y="478" fill="#6868c8">Z</text>
            </g>
          </svg>
          <div class="view-tools">
            <button v-for="v in viewTools" :key="v.icon" :class="{ more: v.more }" :aria-label="v.label">
              <svg class="ic12" viewBox="0 0 16 16" v-html="icons[v.icon]" />
            </button>
          </div>
        </div>
      </section>

      <aside class="dock">
        <button class="dock-tab"><svg class="ic8" viewBox="0 0 16 16" v-html="icons.material" /><span>Материалы</span></button>
      </aside>
    </main>

    <footer class="status">
      <span class="prompt">&gt;</span>
      <span class="picked">Выбрано: _15</span>
      <span class="cell" />
    </footer>
  </div>
</template>

<style>
body { margin: 0; background: #c8ccd6; }
</style>

<style scoped>
.app {
  display: grid;
  grid-template-rows: 12px 12px 48px minmax(0, 1fr) 11px;
  height: 100vh;
  overflow: hidden;
  background: #fff;
  color: #444;
  font: 6px/8px Roboto, "Open Sans", sans-serif;
}
button {
  padding: 0;
  border: 0;
  background: none;
  color: inherit;
  font: inherit;
  white-space: nowrap;
}
svg { flex: none; }
.ic6 { display: block; width: 6px; height: 6px; }
.ic8 { display: block; width: 8px; height: 8px; }
.ic9 { display: block; width: 9px; height: 9px; }
.ic12 { display: block; width: 12px; height: 12px; }
.ic16 { display: block; width: 16px; height: 16px; }
.caret { flex: none; width: 8px; height: 2px; }
.caret::after {
  content: "";
  display: block;
  width: 0;
  margin: 0 auto;
  border: 2px solid transparent;
  border-top-color: #666;
  border-bottom: 0;
}

.titlebar { display: grid; grid-template-columns: 1fr auto 1fr; align-items: center; }
.quick { display: flex; align-items: center; padding-left: 2px; }
.mini { display: flex; justify-content: center; flex: none; width: 9px; }
.spaced { margin-right: 3px; }
h1 { margin: 0; color: #333; font-size: 6px; font-weight: 400; line-height: 12px; }
.account { display: flex; align-items: center; justify-content: flex-end; padding-right: 9px; }
.docs { display: flex; align-items: center; gap: 2px; margin-right: 15px; }
.win { width: 6px; margin-left: 17px; }
.docs + .win { margin-left: 0; }

.ribbon-tabs { display: flex; height: 11px; border-bottom: 1px solid #bcd6ea; }
.file {
  width: 28px;
  background: linear-gradient(#2f6fc4, #1f5cb0);
  color: #fff;
  font-weight: 700;
}
.rtab { padding: 0 6px; border: 1px solid transparent; border-bottom: 0; color: #555; }
.file + .rtab { margin-left: 3px; }
.rtab.on { margin-bottom: -1px; padding-bottom: 1px; border-color: #b4d0e8; background: #fff; color: #3a5a80; }
.tab-tools { display: flex; align-items: center; margin-left: auto; padding-right: 1px; }
.tab-tools .mini + .mini { margin-left: 2px; }

.ribbon {
  display: grid;
  grid-template-columns: 109px 110px 229px 66px 59px;
  border-bottom: 2px solid #9fb8d8;
  background: linear-gradient(#fdfdfe, #e9ecf1);
}
.group { display: flex; flex-direction: column; align-items: center; padding-top: 3px; border-right: 1px solid #d4dce8; }
.group-items { display: flex; gap: 1px; height: 35px; }
.big {
  display: flex;
  flex-direction: column;
  align-items: center;
  padding: 1px 0 0;
  border: 1px solid transparent;
  color: #3c3c3c;
  line-height: 7px;
}
.big .ic16 { margin-bottom: 2px; }
.big:disabled { color: #a0a3aa; }
.big.on { border-color: #e2b848; background: linear-gradient(#ffd978, #fdd566); }
.group-name { color: #707884; line-height: 8px; }

.work {
  display: grid;
  grid-template-columns: 164px minmax(0, 1fr) 13px;
  background: #c9ced8;
}
.side {
  display: grid;
  grid-template: 314px minmax(0, 1fr) / minmax(0, 1fr);
  gap: 5px;
  padding: 2px 0 3px 1px;
  border-right: 1px solid #b8bec8;
}
.pane { display: flex; flex-direction: column; min-height: 0; }
.pane-head {
  display: flex;
  align-items: center;
  gap: 3px;
  height: 9px;
  margin: 0;
  padding: 0 1px 0 2px;
  background: #d3d9e2;
  color: #222;
  font-size: 6px;
  font-weight: 600;
}
.pane-head button:first-of-type { margin-left: auto; }
.pane-body { display: flex; flex-direction: column; flex: 1; min-height: 0; border: 1px solid #ecc890; background: #fff; }
.toolbar { display: flex; align-items: center; gap: 3px; height: 14px; padding-left: 4px; background: #f2f3f5; }
.search { display: flex; align-items: center; width: 49px; height: 11px; border: 1px solid #e0e2e6; background: #fff; }
.search input { flex: 1; min-width: 0; height: 9px; padding: 0; border: 0; font: inherit; outline: 0; }
.last { margin-left: auto; }
.last + .caret { margin-left: -3px; }
.pale { opacity: .6; }
.col-head { display: flex; justify-content: space-between; align-items: center; height: 10px; padding: 0 2px; border-bottom: 1px solid #e4e6ea; color: #666; }
.tree {
  display: grid;
  grid-auto-rows: 1fr;
  height: 105px;
  margin: 0;
  padding: 0;
  list-style: none;
  color: #333;
}
.tree li { display: flex; align-items: center; gap: 1px; padding-right: 2px; }
.tree .lv0 { padding-left: 0; }
.tree .lv1 { padding-left: 11px; }
.tree .lv2 { padding-left: 23px; }
.tree .arrow { width: 7px; color: #555; font: 5px/8px "DejaVu Sans", sans-serif; text-align: center; }
.tree .label { flex: 1; min-width: 0; white-space: nowrap; overflow: hidden; }
.tree .red { color: #e02020; }
.tree .selected { background: #820f8c; color: #fff; font-weight: 600; }

.pane-tabs { display: flex; height: 12px; padding-right: 2px; background: #c9ced8; }
.pane-tabs button {
  position: relative;
  display: flex;
  flex: 1;
  align-items: center;
  gap: 1px;
  height: 11px;
  padding-left: 2px;
  border-bottom: 1px solid #98a0ac;
  background: #d6dbe3;
  color: #333;
}
.pane-tabs button::after {
  content: "";
  position: absolute;
  top: 0;
  right: 2px;
  width: 3px;
  height: 11px;
  border-right: 1px solid #8890a0;
  transform: skewX(-28deg);
}
.pane-tabs .on { background: linear-gradient(#fdc068, #fbb04c); clip-path: polygon(0 0, 100% 0, calc(100% - 6px) 100%, 0 100%); }
.pane-tabs.wide { justify-content: flex-start; }
.pane-tabs.wide button { flex: none; padding: 0 6px 0 3px; }

table { width: 100%; border-collapse: collapse; table-layout: fixed; }
th { height: 10px; padding: 0 2px; border-right: 1px solid #d6d8dc; border-bottom: 1px solid #d6d8dc; background: #f3f3f4; color: #444; font-weight: 400; text-align: left; }
.c1 { width: 9px; }
.c2 { width: 4px; }

.documents { display: flex; flex-direction: column; min-width: 0; min-height: 0; padding: 1px 0 2px 4px; }
.doc-tabs { display: flex; align-items: stretch; height: 13px; background: #dfe3e8; }
.dtab { display: flex; align-items: center; gap: 2px; padding: 0 3px 0 2px; color: #555; }
.dtab.on { margin-left: 2px; padding: 0 1px; border: 1px solid #a8b0bc; border-bottom: 0; border-radius: 2px 2px 0 0; background: #fff; color: #222; }
.dtab button { width: 6px; color: #555; font-size: 7px; }
.end { margin: 6px 0 0 auto; }
.view { display: flex; flex: 1; align-items: flex-start; min-height: 0; border: 1px solid #9aa0aa; border-bottom: 0; border-right-width: 0; background: #fff; }
.scene { flex: 1; align-self: stretch; min-width: 0; height: 100%; font-family: "Liberation Sans", Arial, sans-serif; }
.tube { fill: none; }
.rounded { stroke-linecap: round; }
.caption { fill: #111; font-family: "DejaVu Sans", sans-serif; font-size: 7px; }
.mark { fill: #777; font-size: 6px; }
.axes { font-size: 6px; }
.view-tools { display: flex; flex-direction: column; gap: 3px; width: 17px; margin-right: 1px; padding: 1px 0; border-left: 1px solid #c4c8ce; border-bottom: 1px solid #c4c8ce; background: #f1f1f2; }
.view-tools button { position: relative; display: flex; justify-content: center; }
.more::after { content: ""; position: absolute; right: 0; bottom: 0; border: 1px solid #222; border-top-color: transparent; border-left-color: transparent; }

.dock { padding-top: 2px; background: #c3c8d4; }
.dock-tab {
  display: flex;
  flex-direction: column;
  align-items: center;
  gap: 2px;
  width: 12px;
  height: 51px;
  margin-left: 1px;
  padding-top: 2px;
  background: #fdc274;
  clip-path: polygon(0 0, 100% 0, 100% 100%, 0 calc(100% - 8px));
  color: #333;
}
.dock-tab span { writing-mode: vertical-rl; line-height: 10px; }

.status {
  display: grid;
  grid-template-columns: 394px 1fr 50px;
  align-items: center;
  padding: 0 2px;
  border-top: 1px solid #a8adb6;
  background: linear-gradient(#d8dce2, #c3c7ce);
  color: #444;
}
.cell { height: 8px; border-left: 1px solid #eef0f4; }
</style>
